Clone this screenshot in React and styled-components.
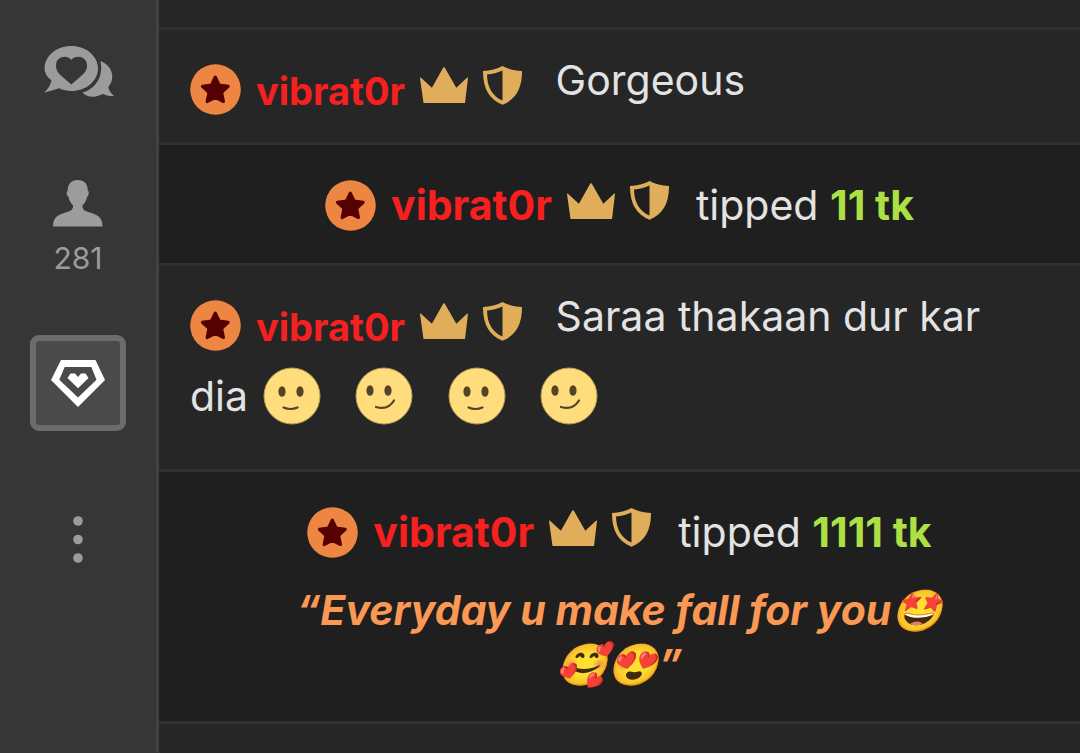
import React from "react";
import styled, { createGlobalStyle, css } from "styled-components";

const GlobalStyle = createGlobalStyle`
  * { box-sizing: border-box; }
  body { margin: 0; background: #262626; }
`;

const Page = styled.div`
  display: flex;
  min-height: 100vh;
  font-family: Inter, "Liberation Sans", "Noto Color Emoji", sans-serif;
  font-size: 41px;
  color: #e3e3e3;
`;

const Sidebar = styled.nav`
  flex: none;
  display: flex;
  flex-direction: column;
  gap: 60px;
  padding: 23px 30px;
  background: #363636;
  border-right: 3px solid #414141;
`;

const NavButton = styled.button`
  display: flex;
  flex-direction: column;
  align-items: center;
  justify-content: center;
  gap: 13px;
  width: 96px;
  height: 96px;
  padding: 0;
  border: 6px solid transparent;
  border-radius: 9px;
  background: none;
  color: #9c9c9c;
  font: inherit;
  cursor: pointer;
  ${(p) =>
    p.$active &&
    css`
      background: #4a4a4a;
      border-color: #6c6c6c;
      color: #fff;
    `}
  svg { flex: none; display: block; }
`;

const Count = styled.span`
  font-size: 30px;
  line-height: 36px;
`;

const Feed = styled.main`
  flex: 1;
  min-width: 0;
  display: flex;
  flex-direction: column;
`;

const Row = styled.article`
  border-bottom: 3px solid #303030;
  background: #262626;
`;

const PreviousRow = styled(Row)`
  height: 30px;
`;

const ChatRow = styled(Row)`
  padding: 10px 31px 22px;
  line-height: 80px;
`;

const TipRow = styled(Row)`
  padding: 20px 100px 18px;
  background: #1f1f1f;
  text-align: center;
`;

const TipLine = styled.div`
  display: flex;
  align-items: center;
  justify-content: center;
  gap: 27px;
  height: 80px;
  white-space: nowrap;
`;

const UserName = styled.span`
  padding-top: ${(p) => (p.$large ? 0 : 3)}px;
`;

const UserTag = styled.span`
  display: inline-flex;
  align-items: center;
  gap: 15px;
  height: 51px;
  line-height: 51px;
  font-size: ${(p) => (p.$large ? 41 : 38)}px;
  font-weight: 700;
  color: #f5201f;
  ${(p) =>
    !p.$large &&
    css`
      margin-right: 22px;
      vertical-align: -20px;
    `}
  svg { flex: none; display: block; }
`;

const RankIcon = styled.svg`
  margin-bottom: 9px;
`;

const Amount = styled.strong`
  font-weight: 700;
  color: #ace044;
`;

const Quote = styled.p`
  margin: 11px 30px 12px;
  line-height: 54px;
  font-weight: 700;
  font-style: italic;
  color: #fa9854;
`;

const Smiley = styled.svg`
  width: 58px;
  height: 58px;
  margin: 0 20px 22px 3px;
  vertical-align: -36px;
`;

const ChatIcon = () => (
  <svg width="72" height="54" viewBox="-2 -2 72 54" fill="currentColor" aria-hidden="true">
    <path
      fillRule="evenodd"
      d="M27.3 0C42 0 54 10 54 22.500S42 45 27.300 45C23 45 19 44 15.300 42.200L0 46.700C4 43.500 6.500 39 7.500 34.500C3 31 .6 27 .6 22.500C.6 10 12.500 0 27.300 0ZM27.300 14C23.500 8.500 12 10 12 19.500C12 25 15 28 18 30.500L27.300 38.500L36.500 30.500C40 27.500 43 25 43 19.500C43 10 31 8.500 27.300 14Z"
    />
    <path d="M56.500 15C64 18 68.500 24 68.300 31C68.200 35 66.500 38 64.300 41C65 45 67.500 48 70 50C66 50.300 62 49.500 58.500 48C51 52 43.500 52 38.500 46.500C49 44 60 33 56.500 15Z" />
  </svg>
);

const PersonIcon = () => (
  <svg width="50" height="49" viewBox="0 -2 50 49" fill="currentColor" aria-hidden="true">
    <path d="M24.700 0C31.500 0 35 4.500 34.800 11C36.500 11 36 15.500 34 17C33.500 20.500 31.500 23.500 29.500 25.500C29 29.500 32 31 36 32.300C43 34.500 49.500 36 49.500 46.500H0C0 36 6.500 34.500 13.500 32.300C17.500 31 20.500 29.500 20 25.500C18 23.500 16 20.500 15.500 17C13.500 15.500 13 11 14.700 11C14.500 4.500 18 0 24.700 0Z" />
  </svg>
);

const GemIcon = () => (
  <svg width="54" height="47" viewBox="0 0 54 47" fill="currentColor" aria-hidden="true">
    <path fillRule="evenodd" d="M10 0H44.500L54 20L27 47L0 20ZM13.700 7L8.300 19.700L27 37.500L45.500 19.700L40.300 7Z" />
    <path d="M27 17L24 13.500H19.500L16.500 18L27 28.300L37.500 18L34.500 13.500H30Z" />
  </svg>
);

const DotsIcon = () => (
  <svg width="10" height="47" viewBox="0 0 10 47" fill="currentColor" aria-hidden="true">
    <circle cx="5" cy="5" r="4.800" />
    <circle cx="5" cy="23.500" r="4.800" />
    <circle cx="5" cy="42" r="4.800" />
  </svg>
);

const StarBadge = () => (
  <svg width="51" height="51" viewBox="0 0 51 51" aria-hidden="true">
    <circle cx="25.500" cy="25.500" r="25.300" fill="#ec8642" />
    <path
      d="M25.300 13L29.100 21L38.200 22.300L31.700 28.500L33.500 37.600L25.300 33.400L17.100 37.600L18.900 28.500L12.400 22.300L21.500 21Z"
      fill="#560002"
      stroke="#560002"
      strokeWidth="3"
      strokeLinejoin="round"
    />
  </svg>
);

const Crown = () => (
  <RankIcon width="48" height="36" viewBox="0 0 48 36" fill="#e0ad5b" aria-hidden="true">
    <path d="M0 11Q0 10 1 10.700L11.900 20.800L23.300 .6Q24 -.3 24.700 .6L36.300 20.800L47 10.700Q48 10 48 11L45 36H3.500Z" />
  </RankIcon>
);

const Shield = () => (
  <RankIcon width="39" height="39" viewBox="0 0 39 39" fill="#e0ad5b" aria-hidden="true">
    <path
      fillRule="evenodd"
      d="M19.500 0C25 3 31.500 4.700 39 5C39.200 22 33 33.500 19.500 38.800C6 33.500 -.2 22 0 5C7.500 4.700 14 3 19.500 0ZM19.500 4.500C14.500 6.700 9.500 8 4 8.500C4.300 21 9 30 19.500 34.600Z"
    />
  </RankIcon>
);

const User = ({ large }) => (
  <UserTag $large={large}>
    <StarBadge />
    <UserName $large={large}>vibrat0r</UserName>
    <Crown />
    <Shield />
  </UserTag>
);

const Smile = ({ smirk }) => (
  <Smiley viewBox="0 0 58 58" role="img" aria-label={smirk ? "smirk" : "smile"}>
    <circle cx="29" cy="29" r="28" fill="#ffdd7d" stroke="#b79c55" strokeWidth="1" />
    <g transform={smirk ? "translate(-4 -1)" : undefined}>
      <ellipse cx="19" cy="24.500" rx="3.600" ry="5.300" fill="#54432a" />
      <ellipse cx="37" cy="24.500" rx="3.600" ry="5.300" fill="#54432a" />
    </g>
    <path
      d={smirk ? "M21 40Q33 43.500 39 33.500" : "M20.500 40.500Q27.500 43.500 34.500 40.500"}
      fill="none"
      stroke="#54432a"
      strokeWidth="2.200"
      strokeLinecap="round"
    />
  </Smiley>
);

export default function App() {
  return (
    <>
      <GlobalStyle />
      <Page>
        <Sidebar aria-label="Chat sections">
          <NavButton aria-label="Messages"><ChatIcon /></NavButton>
          <NavButton aria-label="281 users">
            <PersonIcon />
            <Count>281</Count>
          </NavButton>
          <NavButton $active aria-label="Fan club"><GemIcon /></NavButton>
          <NavButton aria-label="More"><DotsIcon /></NavButton>
        </Sidebar>
        <Feed>
          <PreviousRow />
          <ChatRow>
            <User /> Gorgeous
          </ChatRow>
          <TipRow>
            <TipLine>
              <User large />
              <span>tipped <Amount>11 tk</Amount></span>
            </TipLine>
          </TipRow>
          <ChatRow>
            <User /> Saraa thakaan dur kar dia{" "}
            <Smile /> <Smile smirk /> <Smile /> <Smile smirk />
          </ChatRow>
          <TipRow>
            <TipLine>
              <User large />
              <span>tipped <Amount>1111 tk</Amount></span>
            </TipLine>
            <Quote>“Everyday u make fall for you🤩🥰😍”</Quote>
          </TipRow>
        </Feed>
      </Page>
    </>
  );
}
